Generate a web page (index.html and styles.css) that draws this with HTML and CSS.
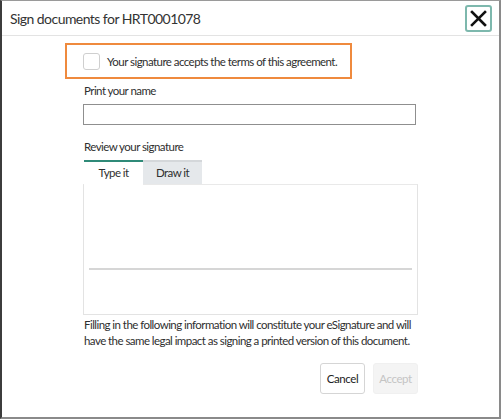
FILE: index.html
```html
<!DOCTYPE html>
<html lang="en">
<head>
    <meta charset="UTF-8">
    <title>Sign documents</title>
    <link rel="stylesheet" href="styles.css">
</head>
<body>
    <div class="modal">
        <!-- Header -->
        <div class="modal-header">
            <h2>Sign documents for HRT0001078</h2>
            <button class="close-button" aria-label="Close">
                <svg width="17" height="17" viewBox="0 0 17 17">
                    <path d="M2 2 L15 15 M15 2 L2 15" stroke="#111" stroke-width="2.6" stroke-linecap="square"/>
                </svg>
            </button>
        </div>

        <!-- Body -->
        <div class="modal-body">
            <label class="accept-box">
                <span class="checkbox"></span>
                <span>Your signature accepts the terms of this agreement.</span>
            </label>

            <div class="field-label">Print your name</div>
            <div class="text-input"></div>

            <div class="field-label review">Review your signature</div>
            <div class="tabs">
                <div class="tab active">Type it</div>
                <div class="tab">Draw it</div>
            </div>
            <div class="tab-panel">
                <div class="sign-line"></div>
            </div>

            <p class="notice">Filling in the following information will constitute your eSignature and will have the same legal impact as signing a printed version of this document.</p>

            <div class="actions">
                <button class="btn">Cancel</button>
                <button class="btn disabled">Accept</button>
            </div>
        </div>
    </div>
</body>
</html>
```

FILE: styles.css
```css
:root {
    --text-primary: #2f2f2f;
    --border-light: #e3e3e3;
    --accent-orange: #ef8a3e;
    --accent-teal: #2f8a78;
    --close-border: #7db8ad;
    --font-primary: 'Lato', 'Open Sans', sans-serif;
}

body {
    margin: 0;
    font-family: var(--font-primary);
    color: var(--text-primary);
    background: #fff;
}

.modal {
    box-sizing: border-box;
    width: 501px;
    height: 419px;
    border-top: 1px solid #9a9a9a;
    border-left: 2px solid #3c3c3c;
    border-right: 2px solid #8a8a8a;
    border-bottom: 2px solid #8a8a8a;
}

.modal-header {
    display: flex;
    align-items: center;
    justify-content: space-between;
    height: 34px;
    padding: 0 7px 0 8px;
    border-bottom: 1px solid var(--border-light);
}

.modal-header h2 {
    margin: 0;
    font-size: 14px;
    font-weight: 400;
    letter-spacing: -0.55px;
    color: #333;
}

.close-button {
    display: flex;
    align-items: center;
    justify-content: center;
    width: 27px;
    height: 27px;
    padding: 0;
    background: #fff;
    border: 2px solid var(--close-border);
    border-radius: 3px;
}

.modal-body {
    padding: 7px 81px 0 81px;
    font-size: 11.5px;
    letter-spacing: -0.55px;
}

.accept-box {
    display: flex;
    align-items: center;
    gap: 7px;
    box-sizing: border-box;
    width: 287px;
    height: 36px;
    margin-left: -18px;
    padding-left: 16px;
    border: 2px solid var(--accent-orange);
}

.checkbox {
    width: 15px;
    height: 15px;
    border: 1px solid #cfcfcf;
    border-radius: 3px;
}

.field-label {
    margin: 5px 0 6px 1px;
    line-height: 14px;
}

.field-label.review {
    margin-top: 15px;
}

.text-input {
    box-sizing: border-box;
    width: 333px;
    height: 21px;
    border: 1px solid #8f8f8f;
}

.tabs {
    display: flex;
    margin-left: 1px;
}

.tab {
    box-sizing: border-box;
    width: 59px;
    height: 24px;
    line-height: 22px;
    text-align: center;
    background: #e5e8eb;
    border-top: 2px solid #d4d7da;
}

.tab.active {
    height: 25px;
    background: #fff;
    border-top-color: var(--accent-teal);
}

.tab-panel {
    box-sizing: border-box;
    display: flex;
    align-items: flex-start;
    width: 335px;
    height: 131px;
    margin-top: -1px;
    padding: 83px 5px 0;
    border: 1px solid var(--border-light);
    border-top-color: #e9e9e9;
}

.sign-line {
    flex: 1;
    height: 2px;
    background: #d6d6d6;
}

.notice {
    margin: 2px 0 0 1px;
    line-height: 16px;
    width: 345px;
}

.actions {
    display: flex;
    justify-content: flex-end;
    gap: 8px;
    margin-top: 14px;
    width: 335px;
}

.btn {
    width: 45px;
    height: 31px;
    padding: 0;
    font-family: var(--font-primary);
    font-size: 11.5px;
    letter-spacing: -0.4px;
    color: #222;
    background: #fff;
    border: 1px solid #d5d5d5;
    border-radius: 3px;
}

.btn.disabled {
    color: #c4c4c4;
    background: #f4f4f4;
    border-color: #f0f0f0;
}
```
